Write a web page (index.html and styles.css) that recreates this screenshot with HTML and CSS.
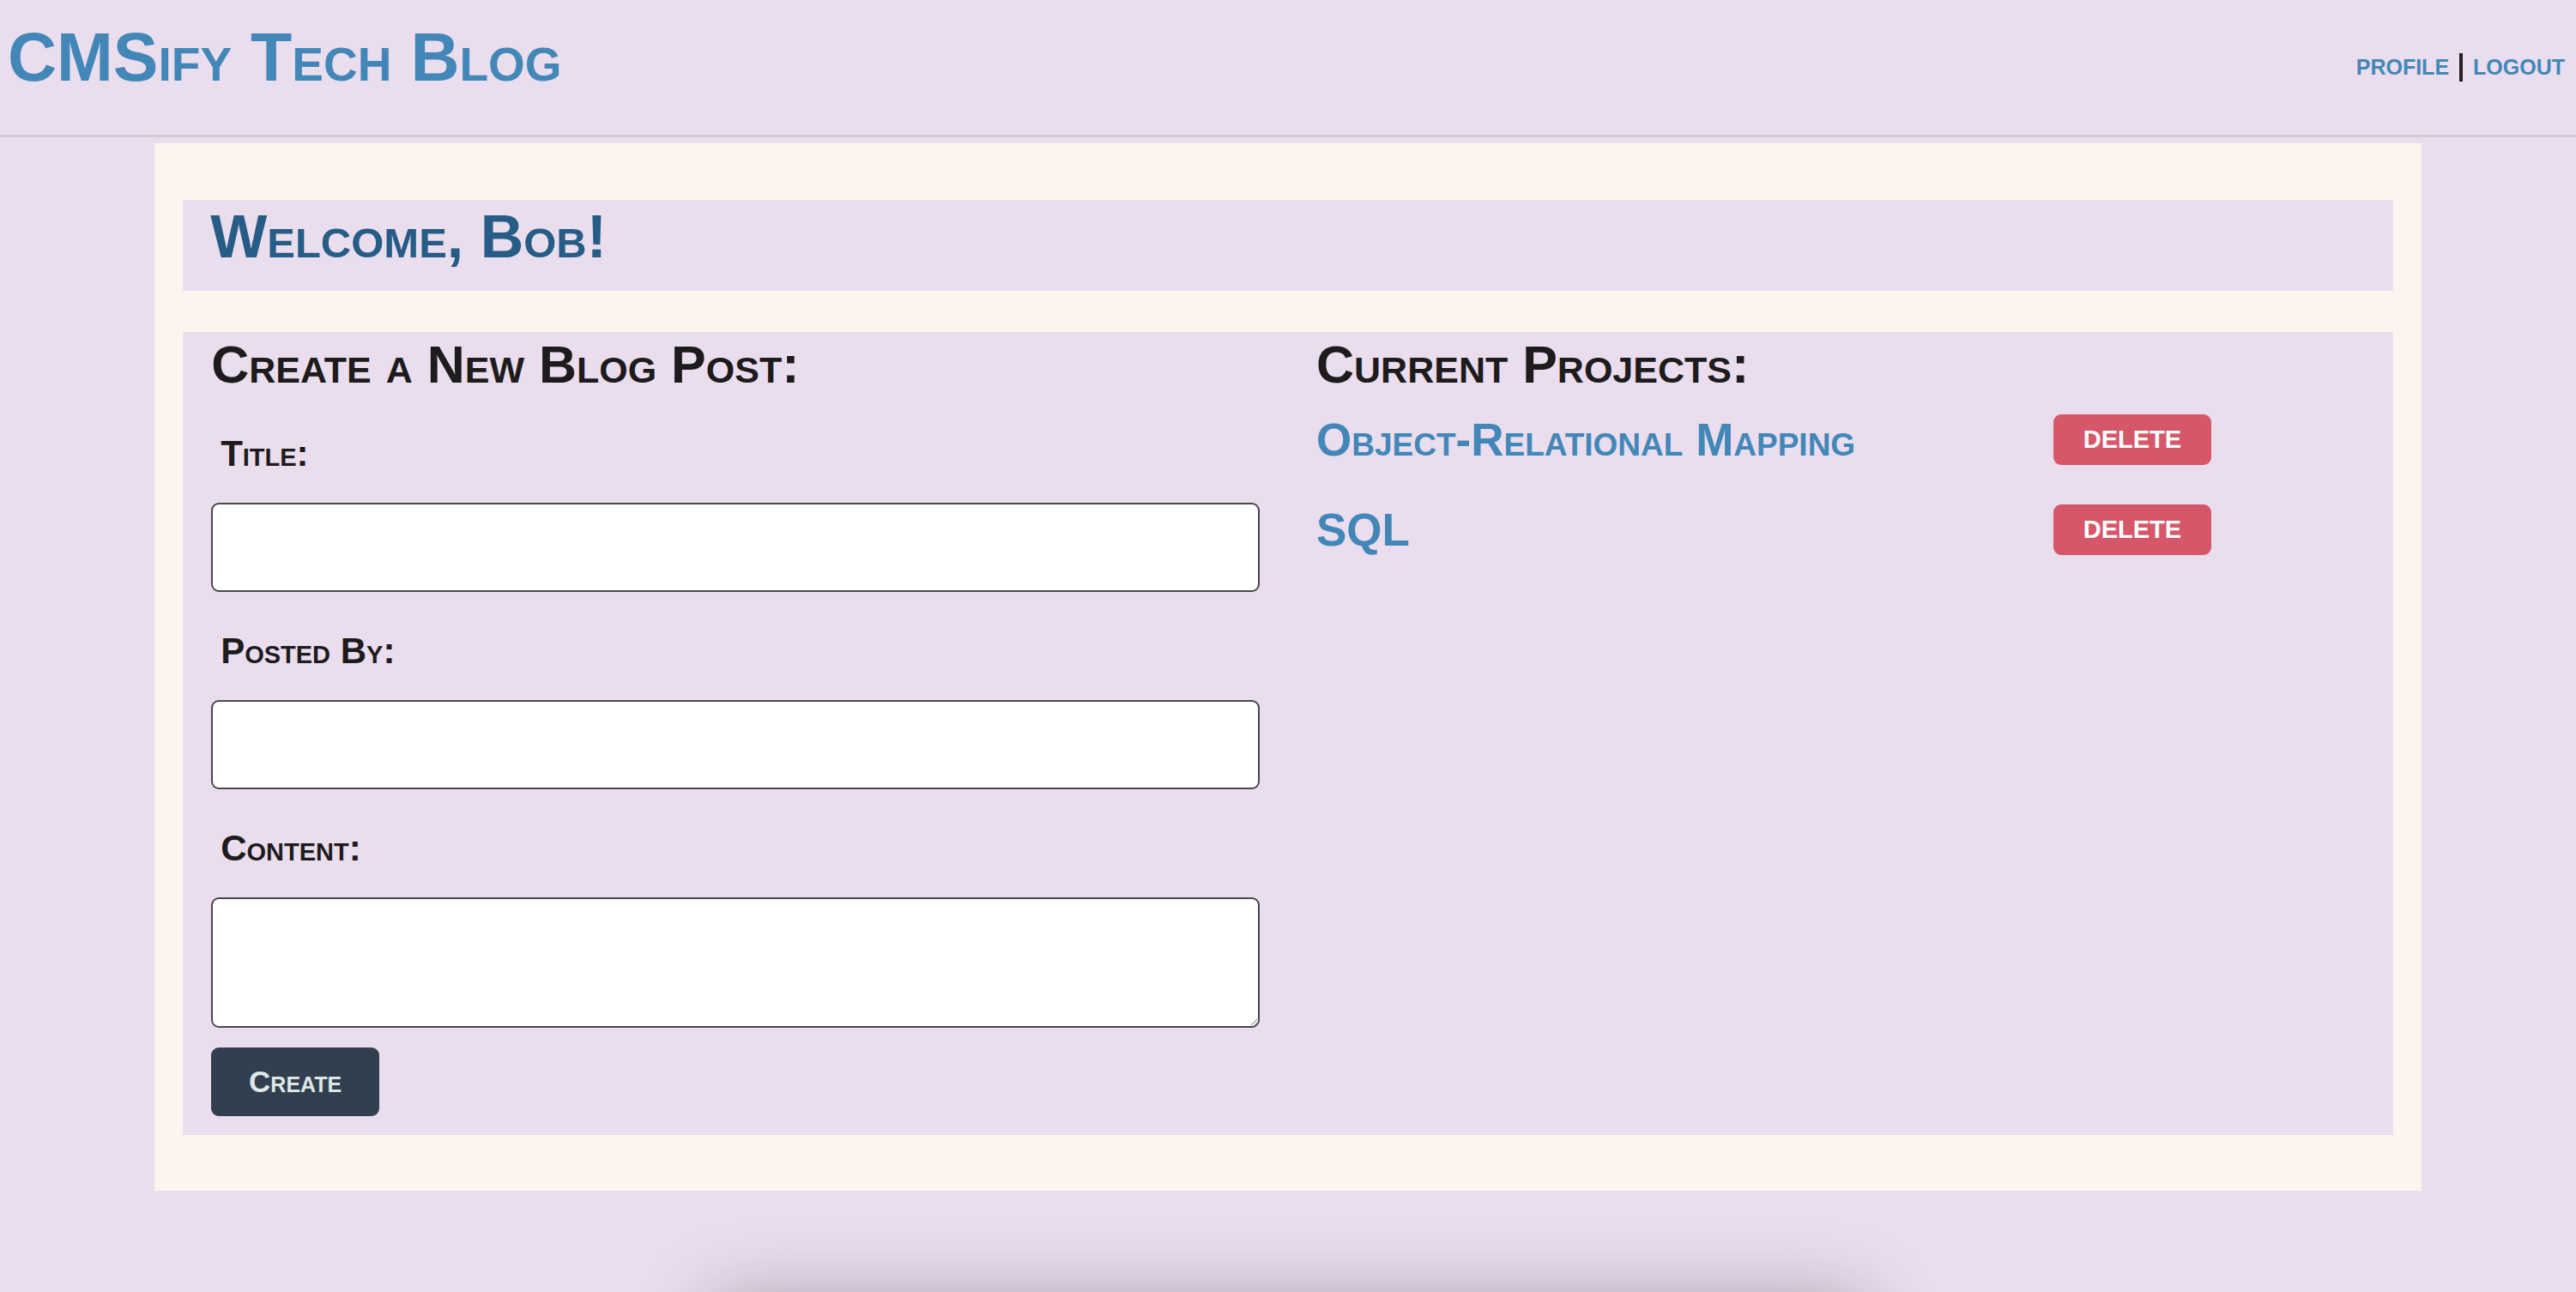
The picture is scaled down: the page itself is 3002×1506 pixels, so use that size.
FILE: index.html
```html
<!DOCTYPE html>
<html lang="en">
<head>
<meta charset="utf-8">
<title>CMSify Tech Blog</title>
<link rel="stylesheet" href="styles.css">
</head>
<body>
<header class="site-header">
  <h1 class="brand">CMSify Tech Blog</h1>
  <nav class="nav">
    <a class="nav-link" href="#">Profile</a>
    <span class="nav-sep"></span>
    <a class="nav-link" href="#">Logout</a>
  </nav>
</header>
<main class="card">
  <section class="welcome">
    <h2 class="welcome-title">Welcome, Bob!</h2>
  </section>
  <section class="panel">
    <div class="col">
      <h2 class="col-title">Create a New Blog Post:</h2>
      <form class="post-form">
        <label class="field-label" for="title">Title:</label>
        <input class="field-input" id="title" type="text">
        <label class="field-label" for="author">Posted By:</label>
        <input class="field-input" id="author" type="text">
        <label class="field-label" for="content">Content:</label>
        <textarea class="field-input field-area" id="content"></textarea>
        <button class="btn-create" type="button">Create</button>
      </form>
    </div>
    <div class="col">
      <h2 class="col-title">Current Projects:</h2>
      <ul class="projects">
        <li class="project">
          <a class="project-name" href="#">Object-Relational Mapping</a>
          <button class="btn-delete" type="button">Delete</button>
        </li>
        <li class="project">
          <a class="project-name" href="#">SQL</a>
          <button class="btn-delete" type="button">Delete</button>
        </li>
      </ul>
    </div>
  </section>
</main>
<footer class="footer">
  <div class="footer-bar"></div>
</footer>
</body>
</html>
```

FILE: styles.css
```css
html, body {
  margin: 0;
  padding: 0;
}

body {
  background: #eaddee;
  font-family: "Liberation Sans", Arial, Helvetica, sans-serif;
  color: #1d1b1c;
}

.site-header {
  display: flex;
  justify-content: space-between;
  align-items: flex-start;
  height: 160px;
  box-sizing: border-box;
  padding: 21px 13px 0 9px;
  border-bottom: 3px solid #cfcbd0;
}

.brand {
  margin: 0;
  font-size: 79px;
  font-weight: 700;
  font-variant: small-caps;
  color: #4287b8;
  line-height: normal;
}

.nav {
  display: flex;
  align-items: center;
  gap: 12px;
  margin-top: 41px;
}

.nav-link {
  font-size: 25px;
  font-weight: 700;
  text-transform: uppercase;
  color: #4287b8;
  text-decoration: none;
}

.nav-sep {
  display: block;
  width: 4px;
  height: 33px;
  background: #222022;
}

.card {
  width: 88%;
  margin: 7px auto 0;
  box-sizing: border-box;
  padding: 66px 33px 65px;
  background: #fdf4ef;
}

.welcome {
  background: #eaddee;
  padding: 3px 32px 23px;
}

.welcome-title {
  margin: 0;
  font-size: 70px;
  font-weight: 700;
  font-variant: small-caps;
  color: #265c85;
  line-height: normal;
}

.panel {
  display: grid;
  grid-template-columns: 1fr 1fr;
  margin-top: 48px;
  background: #eaddee;
  padding-bottom: 22px;
}

.col {
  padding: 4px 33px 0;
  min-width: 0;
}

.col-title {
  margin: 0;
  font-size: 61px;
  font-weight: 700;
  font-variant: small-caps;
  line-height: 69px;
  color: #1d1b1c;
}

.post-form {
  display: flex;
  flex-direction: column;
  align-items: flex-start;
}

.field-label {
  display: block;
  margin: 45px 0 33px 11px;
  font-size: 42px;
  font-weight: 700;
  font-variant: small-caps;
  line-height: normal;
  color: #1d1b1c;
}

.field-input {
  display: block;
  width: 100%;
  height: 104px;
  box-sizing: border-box;
  margin: 0;
  border: 2px solid #4a4849;
  border-radius: 9px;
  background: #ffffff;
  font-family: inherit;
  font-size: 30px;
  padding: 8px 14px;
}

.field-area {
  height: 152px;
  resize: both;
}

.btn-create {
  margin-top: 23px;
  width: 196px;
  height: 80px;
  border: none;
  border-radius: 9px;
  background: #323f4f;
  color: #dde8e6;
  font-family: inherit;
  font-size: 35px;
  font-weight: 700;
  font-variant: small-caps;
  cursor: pointer;
}

.projects {
  list-style: none;
  margin: 0;
  padding: 0;
}

.project {
  display: flex;
  align-items: center;
  padding: 22px 0;
}

.project-name {
  flex: 0 0 70.3%;
  font-size: 53px;
  font-weight: 700;
  font-variant: small-caps;
  line-height: 61px;
  color: #4287b8;
  text-decoration: none;
}

.btn-delete {
  width: 184px;
  height: 59px;
  border: none;
  border-radius: 9px;
  background: #d65769;
  color: #ffffff;
  font-family: inherit;
  font-size: 29px;
  font-weight: 700;
  text-transform: uppercase;
  cursor: pointer;
}

.footer {
  height: 118px;
  overflow: hidden;
  display: flex;
  justify-content: center;
  align-items: flex-start;
}

.footer-bar {
  flex: 0 0 1340px;
  height: 100px;
  margin-top: 130px;
  background: #eaddee;
  box-shadow: 0 0 90px rgba(0, 0, 0, 0.3);
}
```
